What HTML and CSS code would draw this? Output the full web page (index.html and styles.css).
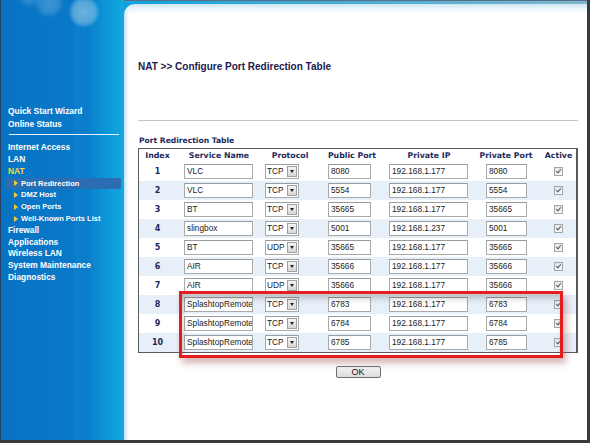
FILE: index.html
```html
<!DOCTYPE html>
<html>
<head>
<meta charset="utf-8">
<link rel="stylesheet" href="styles.css">
</head>
<body>
<div class="frame">
  <nav class="sidebar">
    <ul class="menu">
      <li>Quick Start Wizard</li>
      <li>Online Status</li>
    </ul>
    <div class="divider"></div>
    <ul class="menu">
      <li>Internet Access</li>
      <li>LAN</li>
      <li class="current">NAT</li>
      <li class="sub active"><span class="tri"></span>Port Redirection</li>
      <li class="sub"><span class="tri"></span>DMZ Host</li>
      <li class="sub"><span class="tri"></span>Open Ports</li>
      <li class="sub"><span class="tri"></span>Well-Known Ports List</li>
      <li>Firewall</li>
      <li>Applications</li>
      <li>Wireless LAN</li>
      <li>System Maintenance</li>
      <li>Diagnostics</li>
    </ul>
  </nav>
  <div class="right">
    <div class="topbar"></div>
    <main class="main">
      <h1 class="title">NAT &gt;&gt; Configure Port Redirection Table</h1>
      <div class="rule"></div>
      <h2 class="section">Port Redirection Table</h2>
      <div class="table-wrap">
        <div class="ptable">
          <div class="row head">
            <span>Index</span><span>Service Name</span><span>Protocol</span><span>Public Port</span><span>Private IP</span><span>Private Port</span><span>Active</span>
          </div>
          <div class="row">
            <span class="idx">1</span>
            <span class="c-svc"><span class="inp w-svc">VLC</span></span>
            <span class="c-proto"><span class="sel"><span class="sel-txt">TCP</span><span class="sel-btn"></span></span></span>
            <span class="c-pub"><span class="inp w-port">8080</span></span>
            <span class="c-ip"><span class="inp w-ip">192.168.1.177</span></span>
            <span class="c-priv"><span class="inp w-port2">8080</span></span>
            <span class="c-act"><span class="chk"></span></span>
          </div>
          <div class="row alt">
            <span class="idx">2</span>
            <span class="c-svc"><span class="inp w-svc">VLC</span></span>
            <span class="c-proto"><span class="sel"><span class="sel-txt">TCP</span><span class="sel-btn"></span></span></span>
            <span class="c-pub"><span class="inp w-port">5554</span></span>
            <span class="c-ip"><span class="inp w-ip">192.168.1.177</span></span>
            <span class="c-priv"><span class="inp w-port2">5554</span></span>
            <span class="c-act"><span class="chk"></span></span>
          </div>
          <div class="row">
            <span class="idx">3</span>
            <span class="c-svc"><span class="inp w-svc">BT</span></span>
            <span class="c-proto"><span class="sel"><span class="sel-txt">TCP</span><span class="sel-btn"></span></span></span>
            <span class="c-pub"><span class="inp w-port">35665</span></span>
            <span class="c-ip"><span class="inp w-ip">192.168.1.177</span></span>
            <span class="c-priv"><span class="inp w-port2">35665</span></span>
            <span class="c-act"><span class="chk"></span></span>
          </div>
          <div class="row alt">
            <span class="idx">4</span>
            <span class="c-svc"><span class="inp w-svc">slingbox</span></span>
            <span class="c-proto"><span class="sel"><span class="sel-txt">TCP</span><span class="sel-btn"></span></span></span>
            <span class="c-pub"><span class="inp w-port">5001</span></span>
            <span class="c-ip"><span class="inp w-ip">192.168.1.237</span></span>
            <span class="c-priv"><span class="inp w-port2">5001</span></span>
            <span class="c-act"><span class="chk"></span></span>
          </div>
          <div class="row">
            <span class="idx">5</span>
            <span class="c-svc"><span class="inp w-svc">BT</span></span>
            <span class="c-proto"><span class="sel"><span class="sel-txt">UDP</span><span class="sel-btn"></span></span></span>
            <span class="c-pub"><span class="inp w-port">35665</span></span>
            <span class="c-ip"><span class="inp w-ip">192.168.1.177</span></span>
            <span class="c-priv"><span class="inp w-port2">35665</span></span>
            <span class="c-act"><span class="chk"></span></span>
          </div>
          <div class="row alt">
            <span class="idx">6</span>
            <span class="c-svc"><span class="inp w-svc">AIR</span></span>
            <span class="c-proto"><span class="sel"><span class="sel-txt">TCP</span><span class="sel-btn"></span></span></span>
            <span class="c-pub"><span class="inp w-port">35666</span></span>
            <span class="c-ip"><span class="inp w-ip">192.168.1.177</span></span>
            <span class="c-priv"><span class="inp w-port2">35666</span></span>
            <span class="c-act"><span class="chk"></span></span>
          </div>
          <div class="row">
            <span class="idx">7</span>
            <span class="c-svc"><span class="inp w-svc">AIR</span></span>
            <span class="c-proto"><span class="sel"><span class="sel-txt">UDP</span><span class="sel-btn"></span></span></span>
            <span class="c-pub"><span class="inp w-port">35666</span></span>
            <span class="c-ip"><span class="inp w-ip">192.168.1.177</span></span>
            <span class="c-priv"><span class="inp w-port2">35666</span></span>
            <span class="c-act"><span class="chk"></span></span>
          </div>
          <div class="row alt">
            <span class="idx">8</span>
            <span class="c-svc"><span class="inp w-svc">SplashtopRemote</span></span>
            <span class="c-proto"><span class="sel"><span class="sel-txt">TCP</span><span class="sel-btn"></span></span></span>
            <span class="c-pub"><span class="inp w-port">6783</span></span>
            <span class="c-ip"><span class="inp w-ip">192.168.1.177</span></span>
            <span class="c-priv"><span class="inp w-port2">6783</span></span>
            <span class="c-act"><span class="chk"></span></span>
          </div>
          <div class="row">
            <span class="idx">9</span>
            <span class="c-svc"><span class="inp w-svc">SplashtopRemote</span></span>
            <span class="c-proto"><span class="sel"><span class="sel-txt">TCP</span><span class="sel-btn"></span></span></span>
            <span class="c-pub"><span class="inp w-port">6784</span></span>
            <span class="c-ip"><span class="inp w-ip">192.168.1.177</span></span>
            <span class="c-priv"><span class="inp w-port2">6784</span></span>
            <span class="c-act"><span class="chk"></span></span>
          </div>
          <div class="row alt">
            <span class="idx">10</span>
            <span class="c-svc"><span class="inp w-svc">SplashtopRemote</span></span>
            <span class="c-proto"><span class="sel"><span class="sel-txt">TCP</span><span class="sel-btn"></span></span></span>
            <span class="c-pub"><span class="inp w-port">6785</span></span>
            <span class="c-ip"><span class="inp w-ip">192.168.1.177</span></span>
            <span class="c-priv"><span class="inp w-port2">6785</span></span>
            <span class="c-act"><span class="chk"></span></span>
          </div>
        </div>
        <div class="highlight"></div>
      </div>
      <div class="actions"><button class="btn">OK</button></div>
    </main>
  </div>
</div>
</body>
</html>
```
FILE: styles.css
```css
* { box-sizing: border-box; }
html, body { margin: 0; padding: 0; background: #fff; }
body { font-family: "Liberation Sans", Arial, sans-serif; }

.frame {
  width: 590px;
  height: 443px;
  display: flex;
  border-left: 1px solid #2a3f66;
  border-right: 3px solid #3a3a3a;
  border-bottom: 3px solid #3a3a3a;
  overflow: hidden;
  background: #fff;
}

.sidebar {
  width: 123px;
  flex: none;
  padding: 105px 5px 0 7px;
  background:
    radial-gradient(circle at 83px 12px, rgba(255,255,255,0.4) 0, rgba(255,255,255,0.3) 11px, rgba(255,255,255,0) 16px),
    radial-gradient(circle at 48px 3px, rgba(255,255,255,0.22) 0, rgba(255,255,255,0.14) 10px, rgba(255,255,255,0) 15px),
    radial-gradient(circle at 28px -4px, rgba(255,255,255,0.25) 0, rgba(255,255,255,0) 12px),
    linear-gradient(to right, #0873c3 0, #0a78c8 58%, #0c80cc 62%, #0a7cc9 70%, #0b8ed3 80%, #0fa0db 92%, #14a8e0 100%);
  color: #fff;
}

.menu {
  list-style: none;
  margin: 0;
  padding: 0;
  font-size: 8.4px;
  font-weight: bold;
  line-height: 11.8px;
}
.menu:first-child { line-height: 12.6px; }
.menu li { white-space: nowrap; }
.menu li.current { color: #f2d84a; }
.menu li.sub {
  font-size: 7.5px;
  padding-left: 6px;
  display: flex;
  align-items: center;
}
.menu li.active {
  margin-left: -3px;
  margin-right: -2px;
  padding-left: 9px;
  background: #2a6db3;
}
.tri {
  width: 0;
  height: 0;
  border-top: 3px solid transparent;
  border-bottom: 3px solid transparent;
  border-left: 4px solid #f0cc3a;
  margin-right: 3px;
}
.divider {
  height: 1px;
  background: #e6f2fb;
  margin: 4px 0 7px 1px;
}

.right {
  flex: 1;
  display: flex;
  flex-direction: column;
  background: linear-gradient(to right, #0fa2dc 0, #38a8d4 30%, #7eb6cc 100%);
}
.topbar {
  height: 4px;
  flex: none;
  border-top: 1px solid #56708a;
}
.main {
  flex: 1;
  position: relative;
  border-top-left-radius: 11px;
  padding: 56px 9px 0 14px;
  background:
    linear-gradient(to bottom, #cde6f3 0, #eef7fb 5px, rgba(255,255,255,0) 10px),
    linear-gradient(to right, #bfe3f3 0, #ffffff 5px);
  background-color: #fff;
}

.title {
  margin: 0;
  font-size: 10px;
  line-height: 14px;
  font-weight: bold;
  color: #1c1a4e;
}
.rule {
  height: 1px;
  background: #c4c4c4;
  margin-top: 46px;
}
.section {
  margin: 15px 0 2px 1px;
  font-family: "DejaVu Sans", Verdana, sans-serif;
  font-size: 7.6px;
  line-height: 10px;
  font-weight: bold;
  color: #1a2a5c;
}

.table-wrap { position: relative; }
.ptable {
  width: 440px;
  border: 1px solid #5a5a5a;
  border-right-width: 2px;
  border-bottom-width: 1px;
}
.row {
  display: grid;
  grid-template-columns: 37px 86px 56px 68px 86px 68px 37px;
  height: 19px;
  align-items: center;
  background: #fff;
}
.row.alt { background: #e7eff9; }
.row.head {
  height: 13px;
  font-family: "DejaVu Sans", Verdana, sans-serif;
  font-size: 7.8px;
  font-weight: bold;
  color: #1a2a5c;
  text-align: center;
  white-space: nowrap;
}
.idx {
  text-align: center;
  font-family: "DejaVu Sans", Verdana, sans-serif;
  font-size: 8px;
  font-weight: bold;
  color: #1a2a5c;
}
.c-svc { padding-left: 8px; }
.c-proto { padding-left: 3px; }
.c-pub { padding-left: 10px; }
.c-ip { padding-left: 3px; }
.c-priv { padding-left: 14px; }
.c-act { display: flex; justify-content: center; }

.inp, .sel {
  display: flex;
  align-items: center;
  height: 15px;
  margin-top: -1px;
  border: 1px solid #a9a9a9;
  border-top-color: #9a9a9a;
  background: #fff;
  font-size: 8.3px;
  color: #222;
  padding-left: 2px;
  overflow: hidden;
  white-space: nowrap;
}
.w-svc { width: 69px; }
.w-port { width: 43px; }
.w-ip { width: 79px; }
.w-port2 { width: 41px; }

.sel {
  width: 34px;
  padding-left: 1px;
  padding-right: 1px;
}
.sel-txt { font-size: 8.3px; }
.sel-btn {
  margin-left: auto;
  flex: none;
  width: 10px;
  height: 11px;
  border: 1px solid #a0a0a0;
  background: linear-gradient(#f4f4f4, #d6d6d6);
  position: relative;
}
.sel-btn::after {
  content: "";
  position: absolute;
  left: 1.5px;
  top: 3px;
  border-left: 2.5px solid transparent;
  border-right: 2.5px solid transparent;
  border-top: 3px solid #222;
}

.chk {
  width: 9px;
  height: 9px;
  border: 1px solid #a5a5a5;
  background: linear-gradient(#e6e6e6, #f8f8f8);
  position: relative;
}
.chk::after {
  content: "";
  position: absolute;
  left: 2px;
  top: 0px;
  width: 2px;
  height: 4px;
  border-right: 1.3px solid #4a5a7a;
  border-bottom: 1.3px solid #4a5a7a;
  transform: rotate(40deg);
}

.highlight {
  position: absolute;
  left: 41px;
  top: 143px;
  width: 384px;
  height: 67px;
  border: 3px solid #e31d1d;
  box-shadow: 3px 5px 7px rgba(150, 60, 60, 0.4), inset 0 7px 7px -3px rgba(0, 0, 0, 0.22), inset 4px 0 5px -3px rgba(0,0,0,0.15);
  pointer-events: none;
}

.actions {
  width: 440px;
  display: flex;
  justify-content: center;
  margin-top: 13px;
}
.btn {
  width: 45px;
  height: 12px;
  padding: 0;
  font-family: "Liberation Sans", Arial, sans-serif;
  font-size: 9px;
  line-height: 10px;
  color: #111;
  border: 1px solid #707070;
  border-radius: 2px;
  background: linear-gradient(#f4f4f4, #dcdcdc);
}
```
